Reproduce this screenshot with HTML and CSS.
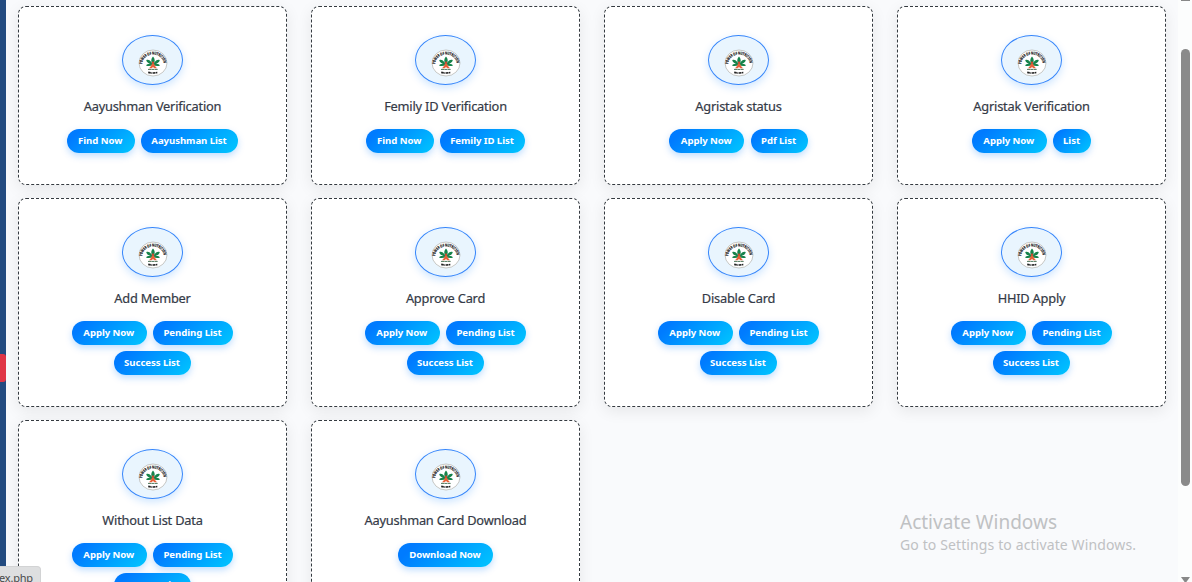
FILE: index.html
```html
<!DOCTYPE html>
<html lang="en">
<head>
<meta charset="utf-8">
<title>Services</title>
<link rel="stylesheet" href="styles.css">
</head>
<body>
<svg class="defs" width="0" height="0" aria-hidden="true">
  <defs>
    <path id="arc" d="M-10.8 1.2A10.8 9.7 0 0 1 10.8 1.2"/>
    <symbol id="emblem" viewBox="-15 -15 30 30">
      <ellipse rx="14" ry="13" fill="#fff" stroke="#b9b9b5" stroke-width=".8"/>
      <text class="seal"><textPath href="#arc" textLength="31" lengthAdjust="spacingAndGlyphs">POWER OF NUTRITION</textPath></text>
      <path d="M0-6.5C2.2-4.4 2-1.6 1 .4 2.6-2.8 5-3.7 6.8-2.8 6.2-.6 4.2.6 2 1.2 4 .7 6 1 7 2.4 4.8 3.6 2.2 3 0 2-2.2 3-4.8 3.6-7 2.4-6 1-4 .7-2 1.2-4.2.6-6.2-.6-6.8-2.8-5-3.7-2.6-2.8-1 .4-2-1.6-2.2-4.4 0-6.5Z" fill="#16834b"/>
      <circle cy="-.3" r="1.1" fill="#d9432c"/>
      <path d="M-1 .6H1L2 3 4 5.2H1.4L0 4-1.4 5.2H-4L-2 3Z" fill="#e8623a"/>
      <path d="M-5 6.4H5" stroke="#4e765a" stroke-width="1" stroke-dasharray="3 .3"/>
      <path d="M-4.8 9.4Q0 10.6 4.8 9.4" fill="none" stroke="#222" stroke-width="1.6" stroke-dasharray="2.6 .5 1.2 .5"/>
    </symbol>
  </defs>
</svg>
<div class="page">
  <aside class="sidebar"><div class="active-item"></div></aside>
  <main class="grid">
    <section class="card"><div class="icon"><svg><use href="#emblem"/></svg></div><h2>Aayushman Verification</h2><div class="actions"><a class="b68">Find Now</a><a class="b97">Aayushman List</a></div></section>
    <section class="card"><div class="icon"><svg><use href="#emblem"/></svg></div><h2>Femily ID Verification</h2><div class="actions"><a class="b68">Find Now</a><a class="b85">Femily ID List</a></div></section>
    <section class="card"><div class="icon"><svg><use href="#emblem"/></svg></div><h2>Agristak status</h2><div class="actions"><a class="b75">Apply Now</a><a class="b57">Pdf List</a></div></section>
    <section class="card"><div class="icon"><svg><use href="#emblem"/></svg></div><h2>Agristak Verification</h2><div class="actions"><a class="b75">Apply Now</a><a class="b38">List</a></div></section>
    <section class="card"><div class="icon"><svg><use href="#emblem"/></svg></div><h2>Add Member</h2><div class="actions"><a class="b75">Apply Now</a><a class="b80">Pending List</a><a class="b77">Success List</a></div></section>
    <section class="card"><div class="icon"><svg><use href="#emblem"/></svg></div><h2>Approve Card</h2><div class="actions"><a class="b75">Apply Now</a><a class="b80">Pending List</a><a class="b77">Success List</a></div></section>
    <section class="card"><div class="icon"><svg><use href="#emblem"/></svg></div><h2>Disable Card</h2><div class="actions"><a class="b75">Apply Now</a><a class="b80">Pending List</a><a class="b77">Success List</a></div></section>
    <section class="card"><div class="icon"><svg><use href="#emblem"/></svg></div><h2>HHID Apply</h2><div class="actions"><a class="b75">Apply Now</a><a class="b80">Pending List</a><a class="b77">Success List</a></div></section>
    <section class="card"><div class="icon"><svg><use href="#emblem"/></svg></div><h2>Without List Data</h2><div class="actions"><a class="b75">Apply Now</a><a class="b80">Pending List</a><a class="b77">Success List</a></div></section>
    <section class="card"><div class="icon"><svg><use href="#emblem"/></svg></div><h2>Aayushman Card Download</h2><div class="actions"><a class="b95">Download Now</a></div></section>
  </main>
  <div class="scrollbar"><div class="cap"></div><div class="thumb"></div><div class="arrow"></div></div>
</div>
<div class="watermark"><div class="wm-title">Activate Windows</div><div class="wm-text">Go to Settings to activate Windows.</div></div>
<div class="status">ex.php</div>
</body>
</html>
```
FILE: styles.css
```css
* { box-sizing: border-box; }
html, body { margin: 0; height: 100%; overflow: hidden; }
body { background: #f9fafc; font-family: "Noto Sans", "Open Sans", sans-serif; }
.defs { position: absolute; }
.page { display: flex; height: 582px; overflow: hidden; }
.sidebar { width: 6px; flex: none; background: #234b80; padding-top: 354px; }
.active-item { height: 28px; background: #e03546; border-radius: 0 3px 3px 0; }
.grid {
  flex: none; width: 1172px; padding: 6px 12px 0;
  display: grid; grid-template-columns: repeat(4, 269px);
  grid-template-rows: 179px 209px 209px; gap: 13px 24px;
}
.card {
  background: #fff; border: 1px dashed #343a40; border-radius: 8px;
  box-shadow: 0 4px 15px rgba(0, 0, 0, .08);
  padding: 28px 40px 0; display: flex; flex-direction: column; align-items: center;
}
.icon {
  width: 61px; height: 50px; flex: none; border: 1px solid #3585fb; border-radius: 50%;
  background: #e9f5fe; box-shadow: 0 3px 8px rgba(0, 123, 255, .2);
  display: flex; justify-content: center; padding-top: 12px;
}
.icon svg { width: 30px; height: 30px; }
.seal { font: 700 4px "Noto Sans", sans-serif; fill: #111; stroke: #111; stroke-width: .2px; }
h2 {
  margin: 11px 0 13px; height: 20px; line-height: 20px; white-space: nowrap;
  font-size: 12.8px; font-weight: 400; letter-spacing: -.2px; color: #343a46;
  -webkit-text-stroke: .2px #343a46;
}
.actions { display: flex; flex-wrap: wrap; justify-content: center; gap: 6px 6.5px; }
.actions a {
  height: 24px; line-height: 23px; border-radius: 12px; text-align: center; white-space: nowrap;
  color: #fff; font-size: 9.6px; font-weight: 700; letter-spacing: -.06px; padding-right: 1px;
  background: linear-gradient(135deg, #007bff 15%, #00c6ff);
  box-shadow: 0 3px 7px rgba(0, 123, 255, .25);
}
.b38 { width: 38px; }
.b57 { width: 57px; }
.b68 { width: 67.5px; }
.b75 { width: 74.6px; }
.b77 { width: 77px; }
.b80 { width: 80px; }
.b85 { width: 85px; }
.b95 { width: 95px; }
.b97 { width: 97px; }
.scrollbar {
  width: 14px; flex: none; background: #fcfdfd;
  display: flex; flex-direction: column; align-items: center; padding-left: 1px;
}
.cap { width: 9px; height: 1px; background: #888; }
.thumb { width: 9px; height: 437px; margin-top: 48px; border-radius: 5px; background: #8a8a8a; }
.arrow { width: 9px; height: 5px; margin-top: 91px; background: #888; clip-path: polygon(0 0, 100% 0, 60% 100%, 40% 100%); }
.watermark { position: absolute; left: 900px; top: 510px; color: #bfc1c3; white-space: nowrap; }
.wm-title { font-size: 19px; line-height: 24px; }
.wm-text { font-size: 14px; line-height: 21px; letter-spacing: .12px; }
.status {
  position: absolute; left: 0; top: 566px; width: 41px; height: 20px;
  background: #dedfe0; border: 1px solid #d2d3d4; border-left: 0; border-radius: 0 4px 0 0;
  font-size: 11px; line-height: 22px; letter-spacing: -.2px; text-indent: -1px; color: #4b4b4b;
}
```
